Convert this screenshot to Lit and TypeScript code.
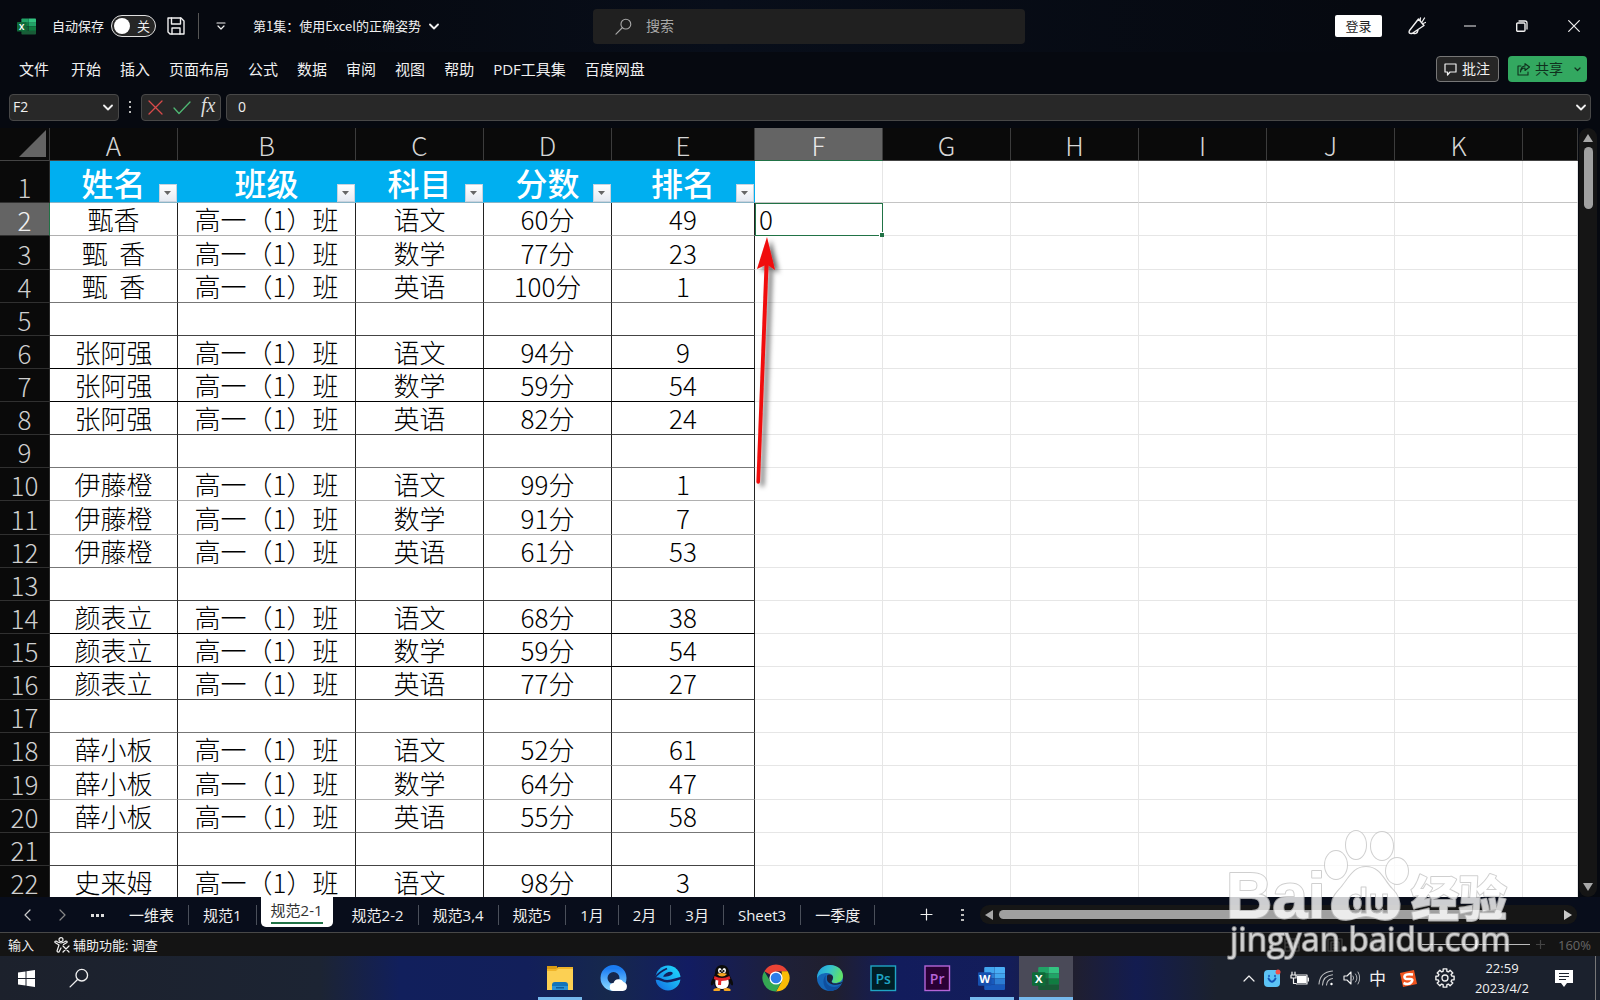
import { LitElement, html, svg, css, nothing } from "lit";
import { customElement } from "lit/decorators.js";
import { classMap } from "lit/directives/class-map.js";

type Row = string[];

const CLASS_NAME = "高一（1）班";
const COLUMNS = ["A", "B", "C", "D", "E", "F", "G", "H", "I", "J", "K", ""];
const HEADINGS = ["姓名", "班级", "科目", "分数", "排名"];
const SCORES: Row[] = [
  ["甄香", "语文", "60分", "49"],
  ["甄  香", "数学", "77分", "23"],
  ["甄  香", "英语", "100分", "1"],
  [],
  ["张阿强", "语文", "94分", "9"],
  ["张阿强", "数学", "59分", "54"],
  ["张阿强", "英语", "82分", "24"],
  [],
  ["伊藤橙", "语文", "99分", "1"],
  ["伊藤橙", "数学", "91分", "7"],
  ["伊藤橙", "英语", "61分", "53"],
  [],
  ["颜表立", "语文", "68分", "38"],
  ["颜表立", "数学", "59分", "54"],
  ["颜表立", "英语", "77分", "27"],
  [],
  ["薛小板", "语文", "52分", "61"],
  ["薛小板", "数学", "64分", "47"],
  ["薛小板", "英语", "55分", "58"],
  [],
  ["史来姆", "语文", "98分", "3"],
];
const MENUS = ["文件", "开始", "插入", "页面布局", "公式", "数据", "审阅", "视图", "帮助", "PDF工具集", "百度网盘"];
const SHEETS = ["一维表", "规范1", "规范2-1", "规范2-2", "规范3,4", "规范5", "1月", "2月", "3月", "Sheet3", "一季度"];
const ACTIVE_SHEET = "规范2-1";

const icon = (w: number, h: number, body: unknown, cls = "") =>
  html`<svg class="icon ${cls}" width=${w} height=${h} viewBox="0 0 ${w} ${h}" aria-hidden="true">${body}</svg>`;

const line = (d: string, width = 1.2) =>
  svg`<path d=${d} fill="none" stroke="currentColor" stroke-width=${width} stroke-linecap="round" stroke-linejoin="round"/>`;

const chevron = () => icon(10, 7, line("M1 1.5 5 5.5 9 1.5", 1.8));

const officeLogo = (size: number, letter: string, c: string[]) => html`<svg class="icon" width=${size} height=${size} viewBox="0 0 26 26" aria-hidden="true">
  <path fill=${c[0]} d="M7 2h9v6H6V3q0-1 1-1z"/><path fill=${c[1]} d="M16 2h9q1 0 1 1v5H16z"/>
  <path fill=${c[2]} d="M6 8h10v5H6z"/><path fill=${c[0]} d="M16 8h10v5H16z"/>
  <path fill=${c[3]} d="M6 13h10v6H6z"/><path fill=${c[2]} d="M16 13h10v6H16z"/>
  <path fill=${c[3]} d="M6 19h20v4q0 1-1 1H7q-1 0-1-1z"/>
  <rect x="0" y="7" width="13" height="13" rx="1" fill=${c[4]}/>
  <text x="6.5" y="17.5" text-anchor="middle" font-family="Open Sans" font-weight="700" font-size="11" fill="#fff">${letter}</text>
</svg>`;

const EXCEL = ["#21a366", "#33c481", "#107c41", "#185c37", "#0e6b39"];
const WORD = ["#41a5ee", "#4aaef5", "#2b7cd3", "#185abd", "#1650ae"];

const folderIcon = icon(28, 28, svg`
  <path fill="#d99a12" d="M1 2h10v5H1z"/><path fill="#f0b429" d="M1 5h9l2-2h15v22H1z"/>
  <path fill="#fcd053" d="M1 7h9l2-2h15v21H1z"/>
  <path fill="#1273ba" d="M6 26v-5q0-3 3-3h10q3 0 3 3v5z"/><path fill="#2b93d8" d="M6 22h16v4H6z"/><path fill="#0e5c9c" d="M10 23h8v1.500h-8z"/>`);

const cloudBrowserIcon = icon(28, 28, svg`
  <defs><linearGradient id="qb" x1="0" y1="0" x2="0" y2="1"><stop offset="0" stop-color="#1b7cf2"/><stop offset="1" stop-color="#7ed0ff"/></linearGradient></defs>
  <circle cx="13.500" cy="14" r="9.500" fill="none" stroke="url(#qb)" stroke-width="7"/>
  <path fill="#fff" d="M14 27a4 4 0 0 1-.5-8 5.500 5.500 0 0 1 10-1A4.600 4.600 0 0 1 23 27z"/>`);

const eBrowserIcon = icon(28, 28, svg`
  <defs>
    <linearGradient id="eb" x1="0" y1="1" x2="1" y2="0"><stop offset="0" stop-color="#1467e0"/><stop offset="0.500" stop-color="#18a8f0"/><stop offset="1" stop-color="#1fe0ff"/></linearGradient>
    <mask id="em"><rect width="28" height="28" fill="#fff"/>
      <path d="M9 12.500C11 8.500 17 6.500 18.500 8.500S14 13.500 9 12.500z"/>
      <path fill="none" stroke="#000" stroke-width="2.400" d="M-1 15.500C4 12 7 17 13 17.200S24 14 29 14"/>
      <path fill="none" stroke="#000" stroke-width="1.600" d="M0 14.500Q5 8 13 4.500"/></mask>
  </defs>
  <circle cx="14" cy="14" r="12.500" fill="url(#eb)" mask="url(#em)"/>`);

const penguinIcon = icon(28, 28, svg`
  <path fill="#0b0b0b" d="M14 1c5 0 7 4 7 8 0 3 5 8 4 12-1 1-2 0-3-2 0 4-4 7-8 7s-8-3-8-7c-1 2-2 3-3 2-1-4 4-9 4-12 0-4 2-8 7-8z"/>
  <path fill="#fff" d="M8 15h12c2 5 0 10-6 10s-8-5-6-10z"/>
  <ellipse cx="11.800" cy="6.500" rx="1.800" ry="2.500" fill="#fff"/><ellipse cx="16.200" cy="6.500" rx="1.800" ry="2.500" fill="#fff"/>
  <circle cx="12.300" cy="7" r=".9"/><circle cx="15.700" cy="7" r=".9"/>
  <path fill="#f5a623" d="M9 10q5-2 10 0-2 2.500-5 2.500T9 10z"/>
  <path fill="#e3262b" d="M6.500 12q7.500 4 15 0l.8 3q-4 2-9 2l-.3 4H10l.3-4.500q-2.500-.5-4.500-1.500z"/>
  <path fill="#f5a623" d="M5 26q2-3 7-1.500 1 2-1 2.500H6zM23 26q-2-3-7-1.500-1 2 1 2.500h5z"/>`);

const chromeIcon = icon(28, 28, svg`
  <path fill="#ea4335" d="M14 14 2.300 7.300A13.400 13.400 0 0 1 25.700 7.300L14 7.500z"/>
  <path fill="#fbbc05" d="M25.700 7.300A13.400 13.400 0 0 1 14 27.500L20 17 19.600 7.300z"/>
  <path fill="#34a853" d="M2.300 7.300A13.400 13.400 0 0 0 14 27.500L19.700 17.300 8.300 17.300z"/>
  <circle cx="14" cy="14" r="6.600" fill="#fff"/><circle cx="14" cy="14" r="5.300" fill="#2f7de9"/>`);

const edgeIcon = icon(28, 28, svg`
  <defs><linearGradient id="eg" x1="0" y1="0" x2="1" y2="0.300"><stop offset="0" stop-color="#1f9de0"/><stop offset="0.500" stop-color="#35c1cf"/><stop offset="1" stop-color="#5fe06a"/></linearGradient></defs>
  <circle cx="14" cy="14" r="13" fill="#1567b8"/>
  <path fill="url(#eg)" d="M1 13C2 5 8 1 14 1c8 0 13 5 13 11 0 5-4 7-8 7-3 0-4-1-3-2 3-4 0-8-5-8-5 0-9 2-10 6z"/>
  <path fill="#0f4f9e" d="M10 11c-2 7 2 12 8 12 3 0 6-1 7-3-2 5-7 7-11 7-6-1-9-11-4-16z"/>
  <path fill="#1e2038" d="M11 12c1-2 5-2 6 1 0 2-1 3-1.500 4.500.5 2.500 4.500 3 12 0-4 5-15 4-16.500-1.500z"/>`);

const adobeIcon = (t: string, fill: string, ink: string) => icon(27, 27, svg`
  <rect x="1" y="1" width="24.500" height="24.500" fill=${fill} stroke=${ink} stroke-width="1.400"/>
  <text x="13.200" y="18.500" text-anchor="middle" font-family="Open Sans" font-weight="600" font-size="14" fill=${ink}>${t}</text>`);

const magnifier = (s: number) => html`<svg class="icon" width=${s} height=${s} viewBox="0 0 18 18" aria-hidden="true">
  <circle cx="11.500" cy="6.500" r="5.200" fill="none" stroke="currentColor" stroke-width="1.200"/>${line("M7.700 10.300 1 17")}</svg>`;

const gearPath = (() => {
  const pts: string[] = [];
  for (let i = 0; i < 8; i++) {
    const a = (i * Math.PI) / 4;
    for (const [r, o] of [[7, -0.28], [9.300, -0.2], [9.300, 0.2], [7, 0.28]]) {
      pts.push(`${(10 + r * Math.cos(a + o)).toFixed(1)} ${(10 + r * Math.sin(a + o)).toFixed(1)}`);
    }
  }
  return `M${pts.join("L")}z`;
})();

@customElement("sheet-grid")
export class SheetGrid extends LitElement {
  static styles = css`
    :host { display: flex; flex: 1; min-height: 0; background: #060910; }
    .viewport { position: relative; flex: 1; min-width: 0; overflow: hidden; background: #fff; }
    table { width: 100%; table-layout: fixed; border-collapse: separate; border-spacing: 0;
      font: 300 26px/32px "Noto Sans CJK SC", sans-serif; color: #000; }
    .c-head { width: 50px; } .c-std { width: 128px; } .c-class { width: 178px; } .c-rank { width: 143px; }
    th, td { box-sizing: border-box; padding: 0; height: 33px; font-weight: 300; text-align: center; white-space: pre;
      border-right: 1px solid #e6e6e6; border-bottom: 1px solid #e6e6e6; position: relative; }
    .inner { display: block; height: 32px; line-height: 32px; }
    th .inner { line-height: 34px; }
    thead th { background: #0a0a0a; color: #d6d6d6; border-right-color: #3c3c3c; border-bottom-color: #444; }
    thead th.on { background: #646464; color: #e8e8e8; border-bottom-color: #217346; }
    tbody th { background: #0a0a0a; color: #cfcfcf; border-right-color: #2a2a2a; border-bottom-color: #303030; }
    tbody th.on { background: #646464; color: #f0f0f0; border-right-color: #217346; }
    .corner svg { display: block; margin-left: auto; margin-right: 2px; }
    tbody tr:nth-child(1) > * { height: 42px; border-bottom-color: #c4c4c4; vertical-align: bottom; }
    tbody tr:nth-child(1) > th { border-bottom-color: #303030; }
    tbody tr:nth-child(8n+3) > * { height: 34px; }
    td.data { border-right-color: #222; border-bottom-color: #777; }
    tr:nth-child(8n+2) td.data, tr:nth-child(8n+3) td.data { border-bottom-color: #b0b0b0; }
    tr:nth-child(8n+5) td.data, tr:nth-child(8n+8) td.data { border-bottom-color: #444; }
    tr:nth-child(8n+6) td.data, tr:nth-child(8n+7) td.data { border-bottom-color: #000; }
    tbody tr:nth-child(1) td.title { background: #00aff0; color: #fff; font-weight: 500; font-size: 32px;
      border-right-color: #00aff0; border-bottom-color: #8ab4c6; }
    .title .inner { height: 41px; line-height: 42px; }
    .filter { position: absolute; right: 0; bottom: 0; width: 18px; height: 18px; padding: 0; border: 1px solid #c9d3de;
      background: linear-gradient(#fff, #e6eaf2); display: grid; place-items: center; }
    td.cursor { text-align: left; outline: 1px solid #217346; outline-offset: -1px; z-index: 1; border-color: #217346; }
    td.cursor .inner { padding-left: 4px; }
    .handle { position: absolute; right: -2px; bottom: -2px; width: 4px; height: 4px; background: #217346;
      border-left: 1px solid #fff; border-top: 1px solid #fff; }
    .arrow { position: absolute; left: 746px; top: 104px; z-index: 2; pointer-events: none; }
    .vscroll { width: 22px; box-sizing: border-box; padding: 0 3px 0 1px; display: flex; }
    .track { flex: 1; display: flex; flex-direction: column; align-items: center; gap: 5px; border-radius: 9px; background: #151515; padding: 6px 0; }
    .thumb { width: 9px; height: 62px; border-radius: 5px; background: #a0a0a0; }
    .space { flex: 1; }
  `;

  private cell(column: string, row: number, text: string) {
    if (column === "F" && row === 2) {
      return html`<td class="cursor"><span class="inner">0</span><span class="handle"></span></td>`;
    }
    return html`<td class=${COLUMNS.indexOf(column) < 5 && column ? "data" : ""}>${text ? html`<span class="inner">${text}</span>` : nothing}</td>`;
  }

  render() {
    return html`
      <div class="viewport">
        <table>
          <colgroup>
            <col class="c-head"><col class="c-std"><col class="c-class"><col class="c-std"><col class="c-std"><col class="c-rank">
            ${COLUMNS.slice(5, 11).map(() => html`<col class="c-std">`)}<col>
          </colgroup>
          <thead><tr>
            <th class="corner"><svg width="28" height="28" aria-hidden="true"><path d="M27 0v27H0z" fill="#646464"/></svg></th>
            ${COLUMNS.map((c) => html`<th scope="col" class=${classMap({ on: c === "F" })}><span class="inner">${c}</span></th>`)}
          </tr></thead>
          <tbody>
            <tr>
              <th scope="row"><span class="inner">1</span></th>
              ${HEADINGS.map((h) => html`<td class="title"><span class="inner">${h}</span><button class="filter" aria-label="筛选 ${h}"><svg width="8" height="4"><path d="M0 0h7L3.500 4z" fill="#666"/></svg></button></td>`)}
              ${COLUMNS.slice(5).map(() => html`<td></td>`)}
            </tr>
            ${SCORES.map((r, i) => {
              const values = r.length ? [r[0], CLASS_NAME, r[1], r[2], r[3]] : [];
              return html`<tr>
                <th scope="row" class=${classMap({ on: i === 0 })}><span class="inner">${i + 2}</span></th>
                ${COLUMNS.map((c, k) => this.cell(c, i + 2, values[k] ?? ""))}
              </tr>`;
            })}
          </tbody>
        </table>
        <svg class="arrow" width="50" height="260" aria-hidden="true">
          <defs><filter id="sh" x="-1" y="-0.100" width="3" height="1.200"><feDropShadow dx="4" dy="3" stdDeviation="2.500" flood-color="#000" flood-opacity="0.600"/></filter></defs>
          <path filter="url(#sh)" fill="#f00a0a" d="M21 5 29 38 22.500 33.500 14 250a1.800 1.800 0 0 1-3.600 0L18.500 33.500 11 37z"/>
        </svg>
      </div>
      <div class="vscroll"><div class="track">
        <svg width="10" height="8"><path d="M5 0l5 8H0z" fill="#a8a8a8"/></svg>
        <div class="thumb"></div><div class="space"></div>
        <svg width="10" height="8"><path d="M5 8l5-8H0z" fill="#a8a8a8"/></svg>
      </div></div>`;
  }
}

@customElement("app-root")
export class AppRoot extends LitElement {
  static styles = css`
    :host { display: block; }
    .app { position: relative; display: flex; flex-direction: column; height: 100vh; overflow: hidden; background: #060910;
      color: #f0f0f0; font: 13px/20px "Open Sans", "Noto Sans CJK SC", sans-serif; }
    button, input { font: inherit; color: inherit; background: none; border: 0; padding: 0; margin: 0; outline: none; }
    a { color: inherit; text-decoration: none; }
    .icon { display: block; flex: none; }
    .titlebar { display: flex; align-items: center; height: 52px; padding: 0 20px 0 17px;
      background: linear-gradient(90deg, #060910 20%, #080e1a 45%, #060910 85%); }
    .t-left { flex: 1 1 0; min-width: 0; display: flex; align-items: center; white-space: nowrap; font-family: "Noto Sans CJK SC", sans-serif; }
    .auto { display: flex; align-items: center; gap: 7px; margin: 0 11px 0 16px; }
    .toggle { appearance: none; width: 45px; height: 22px; box-sizing: border-box; border: 1px solid #e0e0e0; border-radius: 11px;
      background: #262626; display: flex; align-items: center; justify-content: space-between; padding: 0 5px 0 2px; }
    .knob { width: 16px; height: 16px; border-radius: 8px; background: #fff; }
    .sep { width: 1px; height: 26px; background: #555; margin: 0 17px 0 13px; }
    .doc { display: flex; align-items: center; gap: 8px; margin-left: 27px; }
    .search { display: flex; align-items: center; gap: 14px; flex: 0 0 27vw; height: 35px; box-sizing: border-box; padding: 0 22px; margin-left: 21px;
      border-radius: 4px; background: #202020; color: #a8a8a8; }
    .search input { flex: 1; min-width: 0; font-size: 14px; }
    .search input::placeholder { color: #a8a8a8; }
    .t-right { flex: 1 1 0; min-width: 0; display: flex; align-items: center; justify-content: flex-end; }
    .login { width: 47px; height: 22px; background: #fff; color: #222; border-radius: 2px; margin-right: 26px; }
    .win { width: 12px; margin-left: 40px; display: flex; justify-content: center; }
    .win.first { margin-left: 38px; }
    .ribbon { display: flex; align-items: center; height: 34px; padding: 0 13px 0 19px; gap: 19px; font-size: 15px; }
    .ribbon a { white-space: nowrap; }
    .ribbon a:first-of-type { margin-right: 3px; }
    .fill { flex: 1; }
    .comment, .share { display: flex; align-items: center; gap: 5px; height: 26px; box-sizing: border-box; border-radius: 4px; white-space: nowrap; font-size: 14px; }
    .comment { border: 1px solid #777; background: #262626; padding: 0 8px 0 7px; margin-right: -10px; }
    .share { background: #33a860; color: #10301d; padding: 0 6px 0 9px; }
    .share .icon:last-child { margin-left: 6px; }
    .formula { display: flex; align-items: center; height: 42px; padding: 0 9px; box-sizing: border-box; font-size: 14px; }
    .box { display: flex; align-items: center; height: 27px; box-sizing: border-box; border: 1px solid #484848; border-radius: 4px; background: #282828; }
    .name { width: 110px; padding: 0 5px 0 3px; }
    .name input { flex: 1; min-width: 0; }
    .dots { margin: 0 10px; }
    .fx { width: 80px; justify-content: space-between; padding: 0 2px 0 6px; margin-right: 5px; }
    .value { flex: 1; padding: 0 4px 0 11px; }
    .value input { flex: 1; min-width: 0; }
    .tabs { display: flex; align-items: center; height: 35px; background: #080d1b; border-bottom: 1px solid #484848; font-size: 15px; }
    .nav { display: flex; padding: 0 0 0 10px; }
    .nav button { width: 35px; height: 30px; display: grid; place-items: center; color: #ccc; }
    .sheet { display: block; height: 20px; padding: 0 14px; border-right: 1px solid #4a4f5a; white-space: nowrap; }
    .sheet.on { height: 30px; align-self: flex-start; margin: 0 5px 0 4px; padding: 0 10px; border: 0; background: #fff; color: #333; border-radius: 0 0 5px 5px; }
    .sheet.on span { display: block; height: 25px; line-height: 26px; border-bottom: 2px solid #217346; }
    .plus { margin-left: 45px; }
    .more { margin-left: 28px; }
    .hscroll { flex: 1; margin: 0 23px 0 16px; height: 19px; display: flex; align-items: center; gap: 6px; padding: 0 5px; border-radius: 9px; background: #161616; }
    .hthumb { flex: 508; height: 9px; border-radius: 5px; background: #a0a0a0; }
    .hrest { flex: 50; }
    .status { display: flex; align-items: center; height: 23px; padding: 0 9px 0 8px; background: #141414; white-space: nowrap; }
    .access { display: flex; align-items: center; gap: 3px; margin-left: 20px; }
    .views { display: flex; gap: 27px; color: #444; margin-right: 36px; }
    .zoom { appearance: none; width: 108px; height: 12px; background: linear-gradient(#bbb, #bbb) center / 100% 1px no-repeat; }
    .zoom::-webkit-slider-thumb { appearance: none; width: 2px; height: 9px; background: #ccc; }
    .pct { margin-left: 13px; color: #666; }
    .zplus { margin-left: 6px; color: #444; }
    .taskbar { display: grid; grid-template-columns: 1fr auto 1fr; align-items: center; height: 44px;
      background: linear-gradient(90deg, #1c212c 0%, #1c2433 20%, #111f5c 25%, #121f5a 33%, #16284c 38%, #121c62 43%, #1e2038 49%, #201f2e 52%, #121c5c 56%, #131d5a 63%, #201f2e 67%, #131c50 71%, #1b212d 76%); }
    .start { display: flex; align-items: center; gap: 34px; padding-left: 18px; }
    .apps { display: flex; padding-left: 5px; height: 44px; }
    .apps button { width: 54px; height: 44px; display: grid; place-items: center; position: relative; }
    .apps .open::after { content: ""; position: absolute; left: 5px; right: 5px; bottom: 0; height: 3px; background: #76b9ed; }
    .apps .current { background: #4a4a58; }
    .apps .current::after { left: 0; right: 0; }
    .tray { display: flex; align-items: center; justify-content: flex-end; gap: 9px; padding-right: 4px; }
    .ime { font-size: 17px; font-family: "Noto Sans CJK SC", sans-serif; }
    .tray .sogou { margin: 0 9px 0 4px; }
    .clock { width: 76px; text-align: center; margin: 0 6px 0 0; }
    .edge { width: 1px; height: 44px; background: #777; margin-left: 13px; }
    .watermark { position: absolute; right: 84px; bottom: 24px; pointer-events: none; }
  `;

  private titlebar() {
    return html`<header class="titlebar">
      <div class="t-left">
        ${officeLogo(19, "X", EXCEL)}
        <div class="auto"><span>自动保存</span><button class="toggle" role="switch" aria-checked="false" aria-label="自动保存"><span class="knob"></span><span>关</span></button></div>
        <button aria-label="保存">${icon(18, 18, svg`${line("M1 1h13l3 3v13H3l-2-2z", 1.400)}${line("M4.500 1v6h9V1M5 17v-6h8v6", 1.400)}`)}</button>
        <span class="sep"></span>
        <button aria-label="自定义快速访问工具栏">${icon(10, 8, svg`${line("M1 1h8")}${line("M2 4 5 7 8 4")}`)}</button>
        <button class="doc"><span>第1集：使用Excel的正确姿势</span>${chevron()}</button>
      </div>
      <label class="search">${magnifier(17)}<input aria-label="搜索" placeholder="搜索"></label>
      <div class="t-right">
        <button class="login">登录</button>
        <button aria-label="即将推出的功能">${icon(18, 18, svg`${line("M10.500 2 1.500 13.500Q0 17 4 16.500L16 8.500zM5 16q4 2 5-3", 1.400)}${line("M12 3.500 12.500 1M14 5l2.500-4M15 6.500l2.500-1", 1.300)}`)}</button>
        <button class="win first" aria-label="最小化">${icon(12, 12, line("M.5 6h11"))}</button>
        <button class="win" aria-label="还原">${icon(12, 12, svg`<rect x=".7" y="3" width="8.300" height="8.300" rx="1" fill="none" stroke="currentColor" stroke-width="1.400"/>${line("M3 1h6q2 0 2 2v6", 1.300)}`)}</button>
        <button class="win" aria-label="关闭">${icon(12, 12, line("M.7.7l10.600 10.600M11.300.7.7 11.300"))}</button>
      </div>
    </header>`;
  }

  private ribbon() {
    return html`<nav class="ribbon">
      ${MENUS.map((m) => html`<a href="#">${m}</a>`)}
      <span class="fill"></span>
      <button class="comment">${icon(13, 13, line("M1 1h11v8H6l-2.500 3V9H1z"))}批注</button>
      <button class="share">${icon(13, 13, svg`${line("M4 3H1v9h10V9", 1.100)}${line("M3.500 9Q4 5 8 5V7.500L12.500 4 8 .7V3Q3.500 3.500 3.500 9z", 1.100)}`)}共享${icon(7, 5, line("M1 1l2.500 2.500L6 1"))}</button>
    </nav>`;
  }

  private formula() {
    return html`<div class="formula">
      <div class="box name"><input aria-label="名称框" .value=${"F2"}><button aria-label="名称列表">${chevron()}</button></div>
      ${icon(2, 12, svg`<path d="M0 0h2v2H0zM0 5h2v2H0zM0 10h2v2H0z" fill="#bbb"/>`, "dots")}
      <div class="box fx">
        <button aria-label="取消">${icon(15, 15, svg`<g color="#d94a4a">${line("M1 1l13 13M14 1 1 14", 1.300)}</g>`)}</button>
        <button aria-label="输入">${icon(18, 15, svg`<g color="#4fb873">${line("M1 8l5 5.500L17 2", 1.300)}</g>`)}</button>
        <button aria-label="插入函数">${icon(18, 20, svg`<text x="1" y="15" font-family="Liberation Serif" font-style="italic" font-size="20" fill="#ddd">fx</text>`)}</button>
      </div>
      <div class="box value"><input aria-label="编辑栏" .value=${"0"}><button aria-label="展开编辑栏">${chevron()}</button></div>
    </div>`;
  }

  private tabs() {
    return html`<nav class="tabs">
      <div class="nav">
        <button aria-label="上一张">${icon(7, 12, line("M6 1 1 6l5 5"))}</button>
        <button aria-label="下一张">${icon(7, 12, svg`<g color="#888">${line("M1 1l5 5-5 5")}</g>`)}</button>
        <button aria-label="全部工作表">${icon(13, 4, svg`<path d="M0 1h3v3H0zM5 1h3v3H5zM10 1h3v3h-3z" fill="#ddd"/>`)}</button>
      </div>
      ${SHEETS.map((s) => html`<a href="#" class=${classMap({ sheet: true, on: s === ACTIVE_SHEET })}><span>${s}</span></a>`)}
      <button class="plus" aria-label="新工作表">${icon(13, 13, line("M6.500 1v11M1 6.500h11"))}</button>
      <span class="more">${icon(3, 12, svg`<path d="M0 0h3v2H0zM0 5h3v2H0zM0 10h3v2H0z" fill="#bbb"/>`)}</span>
      <div class="hscroll">
        <svg class="icon" width="8" height="10"><path d="M0 5l8-5v10z" fill="#a8a8a8"/></svg>
        <div class="hthumb"></div><div class="hrest"></div>
        <svg class="icon" width="8" height="10"><path d="M8 5 0 0v10z" fill="#c8c8c8"/></svg>
      </div>
    </nav>`;
  }

  private status() {
    return html`<footer class="status">
      <span>输入</span>
      <button class="access">${icon(16, 16, svg`<circle cx="7" cy="2.700" r="2" fill="none" stroke="currentColor" stroke-width="1.200"/>${line("M7 6Q4 5.500 2 4q-1.500 0-1 1.500L5 8 3 14q.5 1.500 2 1l2-4M7 6q3-.5 5-2 1.500 0 1 1.500L9.500 7.500M9 9l6 6M15 9l-6 6")}`)}辅助功能: 调查</button>
      <span class="fill"></span>
      <div class="views">
        ${icon(16, 14, line("M1 1h14v12H1zM1 5h14M1 9h14M6 1v12M11 1v12"))}
        ${icon(16, 14, line("M1 1h14v12H1zM4 4h8v9M4 4v9M6 7h4M6 10h4"))}
        ${icon(16, 14, line("M1 1h14v12H1zM6 1v7h5V1M1 8h5"))}
      </div>
      <input class="zoom" type="range" min="10" max="310" value="160" aria-label="缩放">
      <span class="zplus">${icon(9, 9, line("M4.500 0v9M0 4.500h9"))}</span>
      <span class="pct">160%</span>
    </footer>`;
  }

  private taskbar() {
    const apps: [string, unknown, string][] = [
      ["文件资源管理器", folderIcon, "open"],
      ["QQ浏览器", cloudBrowserIcon, ""],
      ["浏览器", eBrowserIcon, ""],
      ["QQ", penguinIcon, ""],
      ["Chrome", chromeIcon, ""],
      ["Edge", edgeIcon, ""],
      ["Photoshop", adobeIcon("Ps", "#001e26", "#1fa5c4"), ""],
      ["Premiere", adobeIcon("Pr", "#2a0034", "#b565d8"), ""],
      ["Word", officeLogo(27, "W", WORD), "open"],
      ["Excel", officeLogo(27, "X", EXCEL), "open current"],
    ];
    return html`<footer class="taskbar">
      <div class="start">
        <button aria-label="开始">${icon(17, 17, svg`<path fill="#fff" d="M0 2.500 7.500 1.500V8H0zM8.500 1.300 17 0v8H8.500zM0 9h7.500v6.500L0 14.500zM8.500 9H17v8l-8.500-1.300z"/>`)}</button>
        <button aria-label="搜索">${magnifier(20)}</button>
      </div>
      <div class="apps">${apps.map(([name, art, cls]) => html`<button class=${cls} aria-label=${name}>${art}</button>`)}</div>
      <div class="tray">
        ${icon(12, 7, line("M1 6l5-5 5 5"))}
        ${icon(17, 18, svg`<rect y="1" width="16" height="17" rx="4" fill="#5cc3f5"/><circle cx="14" cy="3" r="2.500" fill="#f0504a"/><g color="#1256b8">${line("M4.500 9.500Q8 16 11.500 9.500", 1.800)}${line("M5 6.500v1M11 6.500v1", 1.600)}</g>`)}
        ${icon(19, 15, svg`<rect x="7" y="5" width="9.500" height="7" fill="#fff"/>${line("M6.500 4H17v9H6.500M18.500 7v3M2 1v3M5 1v3M1 4h5v3H1zM3.500 7v5.500H6")}`)}
        ${icon(16, 16, svg`<circle cx="13.500" cy="14" r="1.200" fill="#fff"/><g opacity=".75">${line("M1 14Q2 2 14.500 1M4.500 15Q5 6 14.500 4.800M8.500 15Q9 9.500 14.500 8.500", 1.100)}</g>`)}
        ${icon(17, 14, svg`${line("M1 5h3l4-4v12L4 9H1z", 1.100)}<g opacity=".7">${line("M10 5q1.500 2 0 4M12.500 3q3 4 0 8M15 1q3.500 6 0 12", 1)}</g>`)}
        <span class="ime">中</span>
        <span class="sogou">${icon(18, 17, svg`<path fill="#f0541e" d="M1 3 15 0l3 14-14 3z"/><path fill="none" stroke="#fff" stroke-width="2.600" d="M14 4.500Q6 3.500 5.500 6.500T10 9t2.500 3-8 1"/>`)}</span>
        ${icon(20, 20, svg`<circle cx="10" cy="10" r="3" fill="none" stroke="currentColor" stroke-width="1.300"/>${line(gearPath, 1.400)}`)}
        <time class="clock">22:59<br>2023/4/2</time>
        ${icon(18, 17, svg`<path fill="#fff" d="M0 0h18v13h-6l-3 4-3-4H0z"/><path d="M4 3.500h10M4 6.500h10M4 9.500h7" stroke="#1b212d" stroke-width="1.200"/>`)}
        <span class="edge"></span>
      </div>
    </footer>`;
  }

  private watermark() {
    return html`<svg class="watermark" width="292" height="150" viewBox="0 0 292 150" aria-hidden="true">
      <defs><mask id="cut"><rect width="292" height="150" fill="#fff"/><text x="123" y="87" font-family="Liberation Sans" font-weight="700" font-size="35">du</text></mask></defs>
      <g opacity=".8" fill="#fff" stroke="#c4c4c4" stroke-width="2" paint-order="stroke" stroke-linejoin="round">
        <text x="2" y="92" font-family="Liberation Sans" font-weight="700" font-size="64">Bai</text>
        <ellipse cx="112" cy="39" rx="11" ry="14"/><ellipse cx="132" cy="19" rx="10" ry="14"/>
        <ellipse cx="158" cy="20" rx="11" ry="14"/><ellipse cx="173" cy="45" rx="11" ry="13"/>
        <path mask="url(#cut)" d="M142 41c14 0 18 14 26 22 12 11 10 31-7 31-7 0-12-4-19-4s-12 4-20 4c-17 0-18-19-7-30 9-9 13-23 27-23z"/>
        <text x="123" y="87" font-family="Liberation Sans" font-weight="700" font-size="35" fill="none" stroke-width="1">du</text>
        <text x="187" y="90" font-family="Noto Sans CJK SC" font-weight="900" font-size="48">经验</text>
        <text x="6" y="125" font-family="Open Sans" font-weight="500" font-size="33" stroke="#999">jingyan.baidu.com</text>
      </g>
    </svg>`;
  }

  render() {
    return html`<main class="app">
      ${this.titlebar()}${this.ribbon()}${this.formula()}
      <sheet-grid></sheet-grid>
      ${this.tabs()}${this.status()}${this.taskbar()}${this.watermark()}
    </main>`;
  }
}
